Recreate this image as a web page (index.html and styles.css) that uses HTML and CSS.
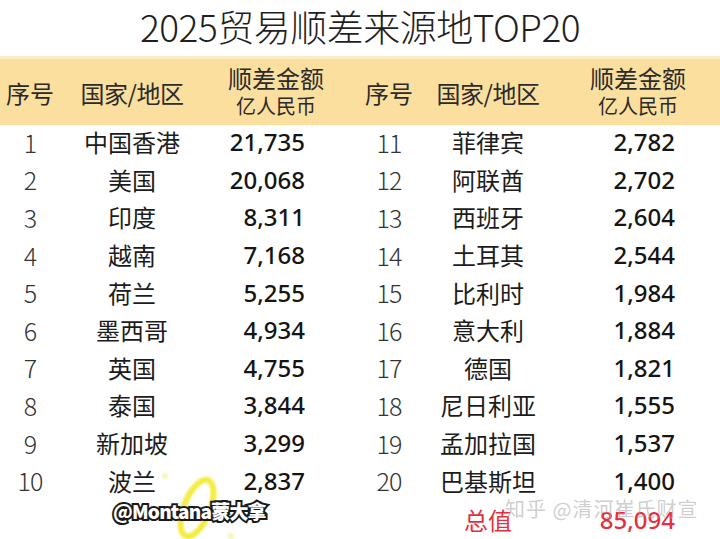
FILE: index.html
```html
<!DOCTYPE html>
<html lang="zh-CN">
<head>
<meta charset="utf-8">
<title>2025贸易顺差来源地TOP20</title>
<link rel="stylesheet" href="styles.css">
</head>
<body>
<div class="page">
  <h1 class="title">2025贸易顺差来源地TOP20</h1>
  <div class="header">
    <div class="half left">
      <div class="h-idx">序号</div>
      <div class="h-name">国家/地区</div>
      <div class="h-val"><span class="h-main">顺差金额</span><span class="h-unit">亿人民币</span></div>
    </div>
    <div class="half right">
      <div class="h-idx">序号</div>
      <div class="h-name">国家/地区</div>
      <div class="h-val"><span class="h-main">顺差金额</span><span class="h-unit">亿人民币</span></div>
    </div>
  </div>
  <div class="body">
    <div class="half left">
      <div class="idx">1</div><div class="name">中国香港</div><div class="val">21,735</div>
      <div class="idx">2</div><div class="name">美国</div><div class="val">20,068</div>
      <div class="idx">3</div><div class="name">印度</div><div class="val">8,311</div>
      <div class="idx">4</div><div class="name">越南</div><div class="val">7,168</div>
      <div class="idx">5</div><div class="name">荷兰</div><div class="val">5,255</div>
      <div class="idx">6</div><div class="name">墨西哥</div><div class="val">4,934</div>
      <div class="idx">7</div><div class="name">英国</div><div class="val">4,755</div>
      <div class="idx">8</div><div class="name">泰国</div><div class="val">3,844</div>
      <div class="idx">9</div><div class="name">新加坡</div><div class="val">3,299</div>
      <div class="idx">10</div><div class="name">波兰</div><div class="val">2,837</div>
    </div>
    <div class="half right">
      <div class="idx">11</div><div class="name">菲律宾</div><div class="val">2,782</div>
      <div class="idx">12</div><div class="name">阿联酋</div><div class="val">2,702</div>
      <div class="idx">13</div><div class="name">西班牙</div><div class="val">2,604</div>
      <div class="idx">14</div><div class="name">土耳其</div><div class="val">2,544</div>
      <div class="idx">15</div><div class="name">比利时</div><div class="val">1,984</div>
      <div class="idx">16</div><div class="name">意大利</div><div class="val">1,884</div>
      <div class="idx">17</div><div class="name">德国</div><div class="val">1,821</div>
      <div class="idx">18</div><div class="name">尼日利亚</div><div class="val">1,555</div>
      <div class="idx">19</div><div class="name">孟加拉国</div><div class="val">1,537</div>
      <div class="idx">20</div><div class="name">巴基斯坦</div><div class="val">1,400</div>
      <div class="idx"></div><div class="name total">总值</div><div class="val total">85,094</div>
    </div>
  </div>
  <div class="glow">
    <svg width="80" height="80" viewBox="0 0 80 80">
      <ellipse cx="40" cy="40" rx="13" ry="30" transform="rotate(22 40 40)" fill="none" stroke="#f2ea2c" stroke-width="6" opacity="0.9"/>
      <circle cx="8" cy="8" r="3" fill="#f3ee80" opacity="0.6"/>
      <circle cx="74" cy="68" r="3" fill="#f3ee80" opacity="0.6"/>
    </svg>
  </div>
  <div class="tag">@Montana蒙大拿</div>
  <div class="mark">知乎 @清河崔氏财宣</div>
</div>
</body>
</html>
```

FILE: styles.css
```css
* { box-sizing: border-box; }
html, body { margin: 0; padding: 0; background: #fff; }
body { width: 720px; height: 539px; overflow: hidden; }
.page {
  position: relative;
  width: 720px;
  height: 539px;
  font-family: "Noto Sans CJK SC", "Noto Sans", sans-serif;
  color: #1e1e1e;
}
.title {
  margin: 0;
  height: 56px;
  font-size: 37px;
  font-weight: 300;
  line-height: 52px;
  text-align: center;
  color: #1f1f1f;
  letter-spacing: -0.5px;
}
.header {
  display: flex;
  height: 69px;
  background: #fadf9f;
  border-top: 3px solid #fcecc6;
}
.half { display: grid; align-items: center; }
.half.left { width: 360px; grid-template-columns: 60px 144px 144px; }
.half.right { width: 360px; grid-template-columns: 58px 140px 160px; }
.header .half { height: 100%; }
.h-idx, .h-name {
  text-align: center;
  font-size: 24px;
  color: #2b2b2b;
  font-weight: 400;
}
.h-name { letter-spacing: -0.5px; }
.h-val {
  display: flex;
  flex-direction: column;
  align-items: center;
  color: #2b2b2b;
  margin-top: -3px;
}
.h-main { font-size: 24px; line-height: 29px; }
.h-unit { font-size: 20px; line-height: 27px; }
.body { display: flex; margin-top: -2px; }
.body .half { grid-auto-rows: 37.6px; }
.idx {
  text-align: center;
  font-size: 25px;
  font-weight: 300;
  color: #333;
  letter-spacing: -1px;
}
.name {
  text-align: center;
  font-size: 24px;
  color: #1c1c1c;
}
.val {
  text-align: right;
  padding-right: 43px;
  font-family: "Noto Sans", "Liberation Sans", sans-serif;
  font-size: 24px;
  font-weight: 500;
  color: #151515;
}
.name.total { color: #e3303f; padding-top: 4px; }
.val.total { color: #e3303f; padding-top: 4px; }
.glow {
  position: absolute;
  left: 157px;
  top: 468px;
  filter: blur(1.2px);
}
.tag {
  position: absolute;
  left: 113px;
  top: 496px;
  font-family: "Noto Sans CJK SC", "Noto Sans", sans-serif;
  font-size: 19px;
  font-weight: 900;
  line-height: 30px;
  color: #fff;
  -webkit-text-stroke: 4px #1a1a1a;
  paint-order: stroke fill;
  letter-spacing: -0.8px;
}
.mark {
  position: absolute;
  left: 505px;
  top: 494px;
  font-size: 20px;
  line-height: 30px;
  color: rgba(165, 165, 165, 0.55);
  letter-spacing: 1px;
  white-space: nowrap;
}
```
